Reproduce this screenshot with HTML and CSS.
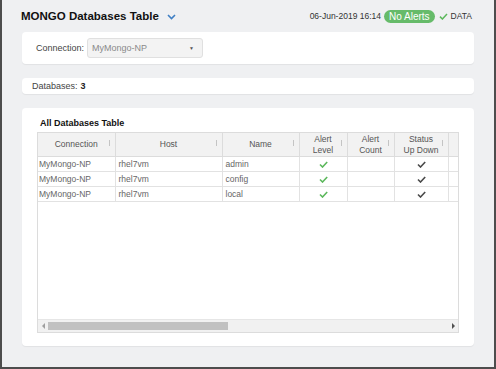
FILE: index.html
```html
<!DOCTYPE html>
<html lang="en">

<head>
    <meta charset="UTF-8">
    <meta name="viewport" content="width=device-width, initial-scale=1.0">
    <title>MONGO Databases Table</title>
    <link rel="stylesheet" href="styles.css">
</head>

<body>
    <div class="frame">
        <header class="top">
            <h1 class="title">MONGO Databases Table
                <svg class="chevron" width="9" height="6" viewBox="0 0 9 6">
                    <path d="M1 1 L4.5 4.5 L8 1" fill="none" stroke="#3f7fc4" stroke-width="1.6" />
                </svg>
            </h1>
            <div class="status">
                <span class="stamp">06-Jun-2019 16:14</span>
                <span class="badge">No Alerts</span>
                <span class="data">
                    <svg width="9" height="7" viewBox="0 0 9 7">
                        <path d="M1 3.6 L3.4 6 L8 1" fill="none" stroke="#5cb85c" stroke-width="1.5" />
                    </svg>
                    DATA
                </span>
            </div>
        </header>

        <section class="panel filter">
            <label class="filter-label">Connection:</label>
            <div class="select">
                <span>MyMongo-NP</span>
                <span class="caret">▼</span>
            </div>
        </section>

        <section class="panel count">
            Databases: <b>3</b>
        </section>

        <section class="panel tablebox">
            <h2 class="table-title">All Databases Table</h2>
            <div class="grid">
                <div class="grid-body">
                    <table>
                        <colgroup>
                            <col style="width: 77px">
                            <col style="width: 107px">
                            <col style="width: 77px">
                            <col style="width: 48px">
                            <col style="width: 47px">
                            <col style="width: 54px">
                            <col style="width: 60px">
                        </colgroup>
                        <thead>
                            <tr>
                                <th class="sort">Connection</th>
                                <th class="sort">Host</th>
                                <th class="sort">Name</th>
                                <th class="sort">Alert<br>Level</th>
                                <th class="sort">Alert<br>Count</th>
                                <th class="sort">Status<br>Up Down</th>
                                <th class="clip"></th>
                            </tr>
                        </thead>
                        <tbody>
                            <tr>
                                <td>MyMongo-NP</td>
                                <td>rhel7vm</td>
                                <td>admin</td>
                                <td class="mid"><svg class="tick" width="9" height="7" viewBox="0 0 9 7"><path d="M1 3.5 L3.5 6 L8.2 1" fill="none" stroke="#5cb85c" stroke-width="1.6"/></svg></td>
                                <td></td>
                                <td class="mid"><svg class="tick" width="9" height="7" viewBox="0 0 9 7"><path d="M1 3.5 L3.5 6 L8.2 1" fill="none" stroke="#4a4a4a" stroke-width="1.6"/></svg></td>
                                <td></td>
                            </tr>
                            <tr>
                                <td>MyMongo-NP</td>
                                <td>rhel7vm</td>
                                <td>config</td>
                                <td class="mid"><svg class="tick" width="9" height="7" viewBox="0 0 9 7"><path d="M1 3.5 L3.5 6 L8.2 1" fill="none" stroke="#5cb85c" stroke-width="1.6"/></svg></td>
                                <td></td>
                                <td class="mid"><svg class="tick" width="9" height="7" viewBox="0 0 9 7"><path d="M1 3.5 L3.5 6 L8.2 1" fill="none" stroke="#4a4a4a" stroke-width="1.6"/></svg></td>
                                <td></td>
                            </tr>
                            <tr>
                                <td>MyMongo-NP</td>
                                <td>rhel7vm</td>
                                <td>local</td>
                                <td class="mid"><svg class="tick" width="9" height="7" viewBox="0 0 9 7"><path d="M1 3.5 L3.5 6 L8.2 1" fill="none" stroke="#5cb85c" stroke-width="1.6"/></svg></td>
                                <td></td>
                                <td class="mid"><svg class="tick" width="9" height="7" viewBox="0 0 9 7"><path d="M1 3.5 L3.5 6 L8.2 1" fill="none" stroke="#4a4a4a" stroke-width="1.6"/></svg></td>
                                <td></td>
                            </tr>
                        </tbody>
                    </table>
                </div>
                <div class="hscroll">
                    <span class="arrow left"></span>
                    <div class="track">
                        <div class="thumb"></div>
                    </div>
                    <span class="arrow right"></span>
                </div>
            </div>
        </section>
    </div>
</body>

</html>
```

FILE: styles.css
```css
html,
body {
    margin: 0;
    padding: 0;
}

body {
    font-family: "Liberation Sans", Arial, sans-serif;
    color: #333;
}

.frame {
    box-sizing: border-box;
    width: 496px;
    height: 369px;
    background: #eff0f2;
    border: 2px solid #4d4d4d;
    border-top: none;
    padding: 0 20px;
}

.top {
    height: 32px;
    display: flex;
    align-items: center;
    justify-content: space-between;
}

.title {
    margin: 0 0 0 -1px;
    font-size: 11.5px;
    font-weight: bold;
    color: #111;
    display: flex;
    align-items: center;
    gap: 8px;
}

.chevron {
    margin-top: 1px;
}

.status {
    display: flex;
    align-items: center;
    font-size: 8.5px;
    color: #333;
}

.badge {
    background: #66bb6a;
    color: #fff;
    font-size: 10px;
    border-radius: 8px;
    padding: 1px 5px;
    margin-left: 3px;
}

.data {
    display: flex;
    align-items: center;
    gap: 3px;
    margin-left: 4px;
    margin-right: 2px;
}

.panel {
    background: #fff;
    border-radius: 4px;
    box-shadow: 0 1px 1px rgba(0, 0, 0, 0.06);
}

.filter {
    height: 32px;
    margin-bottom: 14px;
    display: flex;
    align-items: center;
    padding-left: 14px;
    font-size: 9px;
}

.filter-label {
    color: #444;
    margin-right: 3px;
}

.select {
    box-sizing: border-box;
    width: 116px;
    height: 20px;
    background: #f3f3f3;
    border: 1px solid #e0e0e0;
    border-radius: 3px;
    display: flex;
    align-items: center;
    justify-content: space-between;
    padding: 0 8px 0 4px;
    color: #8a8a8a;
}

.caret {
    font-size: 5px;
    color: #555;
}

.count {
    height: 16px;
    margin-bottom: 14px;
    display: flex;
    align-items: center;
    padding-left: 10px;
    font-size: 9px;
    color: #444;
}

.count b {
    margin-left: 3px;
    color: #222;
}

.tablebox {
    box-sizing: border-box;
    height: 238px;
    padding: 9px 15px 13px 15px;
}

.table-title {
    margin: 0 0 2px 3px;
    font-size: 9px;
    font-weight: bold;
    color: #111;
    height: 13px;
    line-height: 13px;
}

.grid {
    box-sizing: border-box;
    height: 201px;
    border: 1px solid #dcdcdc;
    display: flex;
    flex-direction: column;
}

.grid-body {
    flex: 1;
    overflow: hidden;
}

table {
    table-layout: fixed;
    border-collapse: collapse;
    width: 470px;
    font-size: 8.5px;
}

th {
    background: #f2f2f2;
    color: #555;
    font-weight: normal;
    height: 23px;
    line-height: 11px;
    border-right: 1px solid #dcdcdc;
    border-bottom: 1px solid #dcdcdc;
    position: relative;
    padding: 0 4px;
    text-align: center;
    white-space: nowrap;
}

th.sort::after {
    content: "";
    position: absolute;
    right: 5px;
    top: 7px;
    width: 1px;
    height: 6px;
    background: #c4c4c4;
}

th.clip::before {
    content: "";
    position: absolute;
    left: 9px;
    top: 7px;
    width: 1px;
    height: 5px;
    background: #b0b0b0;
}

td {
    height: 14px;
    padding: 0 3px;
    color: #666;
    border-right: 1px solid #e2e2e2;
    border-bottom: 1px solid #e2e2e2;
    white-space: nowrap;
}

td:first-child {
    padding-left: 1px;
}

td.mid {
    text-align: center;
}

.tick {
    display: inline-block;
    vertical-align: middle;
}

.hscroll {
    height: 12px;
    background: #f1f1f1;
    display: flex;
    align-items: center;
    border-top: 1px solid #e6e6e6;
}

.arrow {
    width: 10px;
    display: flex;
    justify-content: center;
}

.arrow::before {
    content: "";
    border-top: 3px solid transparent;
    border-bottom: 3px solid transparent;
}

.arrow.left::before {
    border-right: 3px solid #a0a0a0;
}

.arrow.right::before {
    border-left: 3px solid #505050;
}

.track {
    flex: 1;
    height: 8px;
}

.thumb {
    width: 180px;
    height: 8px;
    background: #c1c1c1;
}
```
